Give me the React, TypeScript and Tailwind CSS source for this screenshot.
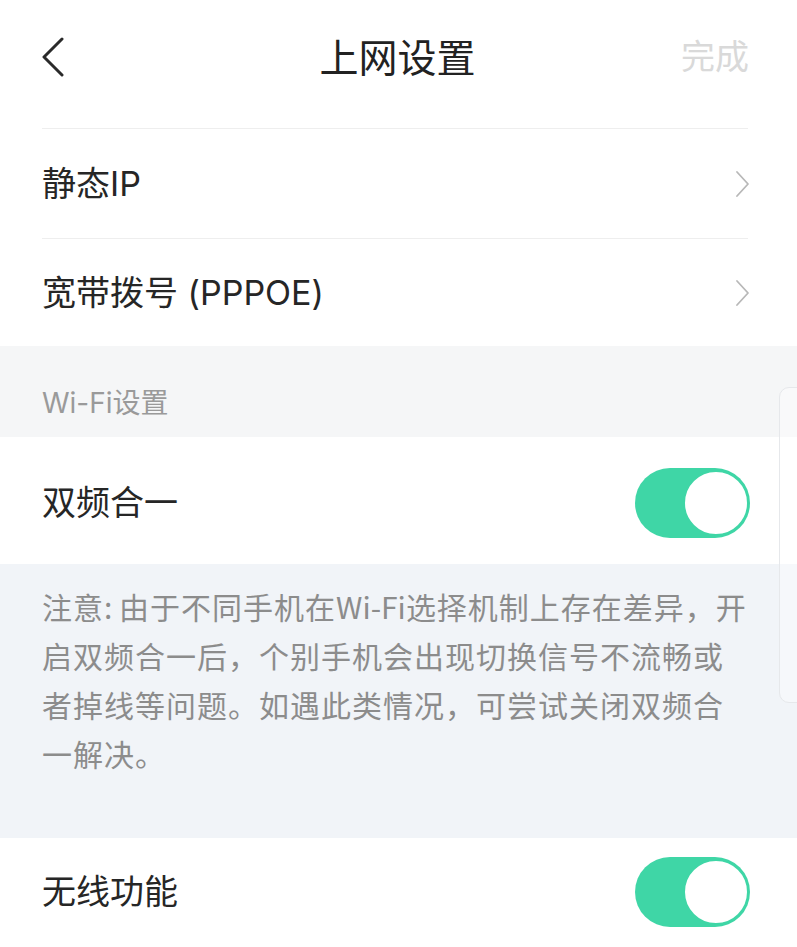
import React from "react";

const font = { fontFamily: 'Inter, "Noto Sans CJK SC", sans-serif' };
const cjkFont = { fontFamily: '"Noto Sans CJK SC", sans-serif' };

function ChevronRight() {
  return (
    <svg width="15" height="28" viewBox="0 0 15 28" fill="none">
      <path d="M2 2 L13 14 L2 26" stroke="#b8b8b8" strokeWidth="1.8" strokeLinecap="round" strokeLinejoin="round" />
    </svg>
  );
}

function Toggle() {
  return (
    <div className="relative w-[115px] h-[70px] rounded-full bg-[#3fd6a6]">
      <div className="absolute right-[1px] top-[2px] w-[66px] h-[66px] rounded-full bg-white border-[2px] border-[#3fd6a6]" />
    </div>
  );
}

export default function App() {
  return (
    <div
      className="relative w-[797px] h-[947px] overflow-hidden bg-white text-[#222]"
      style={font}
    >
      {/* Header */}
      <div className="h-[128px] pb-[14px] pl-[40px] pr-[48px] grid grid-cols-[1fr_auto_1fr] items-center">
        <div className="flex items-center">
          <svg width="26" height="40" viewBox="0 0 26 40" fill="none">
            <path d="M22 2 L4 20 L22 38" stroke="#2a2a2a" strokeWidth="3" strokeLinecap="round" strokeLinejoin="round" />
          </svg>
        </div>
        <div className="text-[39px] leading-none text-[#222] pl-[6px]">上网设置</div>
        <div className="flex justify-end">
          <span className="text-[34px] leading-none text-[#d9d9d9]">完成</span>
        </div>
      </div>

      <div className="ml-[42px] mr-[49px] h-[1px] bg-[#eeeeee]" />

      {/* Rows */}
      <div className="h-[109px] pl-[42px] pr-[47px] flex items-center justify-between">
        <span className="text-[34px] leading-none text-[#262626]">静态IP</span>
        <ChevronRight />
      </div>
      <div className="ml-[42px] mr-[49px] h-[1px] bg-[#eeeeee]" />
      <div className="h-[107px] pl-[42px] pr-[47px] flex items-center justify-between">
        <span className="text-[34px] leading-none text-[#262626]">宽带拨号 (PPPOE)</span>
        <ChevronRight />
      </div>

      {/* Section header */}
      <div className="h-[91px] pt-[22px] pl-[42px] flex items-center bg-[#f5f6f7]">
        <span className="text-[28px] leading-none text-[#9a9a9a]">Wi-Fi设置</span>
      </div>

      {/* Dual band */}
      <div className="h-[127px] pt-[4px] pl-[42px] pr-[47px] flex items-center justify-between bg-white">
        <span className="text-[34px] leading-none text-[#262626]">双频合一</span>
        <Toggle />
      </div>

      {/* Note */}
      <div className="h-[274px] pt-[18px] pl-[42px] pr-[40px] bg-[#f1f4f8]">
        <p className="text-[30px] leading-[49px] tracking-[1px] text-[#8c8c8c]" style={cjkFont}>
          <span className="block whitespace-nowrap">
            注意<span className="tracking-[0px]">: </span>由于不同手机在<span className="tracking-[0px]">Wi-Fi</span>选择机制上存在差异，开
          </span>
          <span className="block whitespace-nowrap">启双频合一后，个别手机会出现切换信号不流畅或</span>
          <span className="block whitespace-nowrap">者掉线等问题。如遇此类情况，可尝试关闭双频合</span>
          <span className="block whitespace-nowrap">一解决。</span>
        </p>
      </div>

      {/* Wireless */}
      <div className="h-[108px] pl-[42px] pr-[47px] flex items-center justify-between bg-white">
        <span className="text-[34px] leading-none text-[#262626]">无线功能</span>
        <Toggle />
      </div>

      {/* Side overlay handle */}
      <div className="absolute left-[779px] top-[387px] w-[30px] h-[316px] rounded-[10px] border border-[#e6e8eb] bg-white/40" />
    </div>
  );
}
